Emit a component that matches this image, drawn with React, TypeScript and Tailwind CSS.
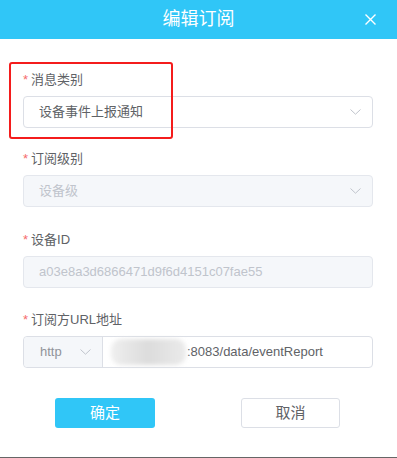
const font = { fontFamily: '"Liberation Sans", "Noto Sans CJK SC", sans-serif' };

const Chevron = ({ className = "" }: { className?: string }) => (
  <svg width="11" height="6" viewBox="0 0 11 6" className={className}>
    <path d="M0.5 0.5 L5.5 5.2 L10.5 0.5" fill="none" stroke="#c0c4cc" strokeWidth="1" />
  </svg>
);

const Label = ({ text }: { text: string }) => (
  <div className="flex h-5 items-center text-[13px] leading-5 text-[#606266]">
    <span className="mr-[3px] text-[#f56c6c]">*</span>
    {text}
  </div>
);

export default function App() {
  return (
    <div className="relative h-[458px] w-[397px] overflow-hidden bg-white" style={font}>
      <div className="relative flex h-[39px] items-center justify-center bg-[#30c6f7]">
        <span className="text-[18px] text-white">编辑订阅</span>
        <svg width="11" height="11" viewBox="0 0 11 11" className="absolute left-[365px] top-[14px]">
          <path d="M0.5 0.5 L10.5 10.5 M10.5 0.5 L0.5 10.5" stroke="white" strokeWidth="1.4" />
        </svg>
      </div>

      <div className="pl-[23px] pr-[24px] pt-[31px]">
        <div className="mb-[21px]">
          <Label text="消息类别" />
          <div className="mt-[6px] flex h-8 items-center justify-between rounded-[4px] border border-[#dcdfe6] bg-white pl-[15px] pr-[11px]">
            <span className="text-[13px] text-[#606266]">设备事件上报通知</span>
            <Chevron />
          </div>
        </div>

        <div className="mb-[23px]">
          <Label text="订阅级别" />
          <div className="mt-[6px] flex h-8 items-center justify-between rounded-[4px] border border-[#e4e7ed] bg-[#f5f7fa] pl-[15px] pr-[11px]">
            <span className="text-[13px] text-[#c0c4cc]">设备级</span>
            <Chevron />
          </div>
        </div>

        <div className="mb-[22px]">
          <Label text="设备ID" />
          <div className="mt-[6px] flex h-8 items-center rounded-[4px] border border-[#e4e7ed] bg-[#f5f7fa] pl-[15px]">
            <span className="text-[13px] text-[#c0c4cc]">a03e8a3d6866471d9f6d4151c07fae55</span>
          </div>
        </div>

        <div>
          <Label text="订阅方URL地址" />
          <div className="mt-[6px] flex h-8 rounded-[4px] border border-[#dcdfe6]">
            <div className="flex w-[79px] items-center justify-between rounded-l-[4px] border-r border-[#dcdfe6] bg-[#f5f7fa] pl-[16px] pr-[11px]">
              <span className="text-[13px] text-[#909399]">http</span>
              <Chevron />
            </div>
            <div className="flex flex-1 items-center pl-[8px]">
              <div className="mr-[1px] h-[26px] w-[75px] rounded-[10px] bg-gradient-to-r from-[#efefef] via-[#dcdcdc] to-[#ebebeb] blur-[2px]" />
              <span className="text-[13px] text-[#606266]">:8083/data/eventReport</span>
            </div>
          </div>
        </div>

        <div className="mt-[30px] flex">
          <button className="ml-[32px] flex h-[30px] w-[100px] items-center justify-center rounded-[3px] bg-[#30c6f7] text-[15px] text-white">
            确定
          </button>
          <button className="ml-[86px] flex h-[30px] w-[99px] items-center justify-center rounded-[3px] border border-[#dcdfe6] bg-white text-[15px] text-[#606266]">
            取消
          </button>
        </div>
      </div>

      <div className="absolute left-[9px] top-[62px] h-[77px] w-[164px] rounded-[3px] border-2 border-[#f41c1c]" />
      <div className="absolute bottom-0 left-0 h-[1px] w-full bg-[#666666]" />
    </div>
  );
}
